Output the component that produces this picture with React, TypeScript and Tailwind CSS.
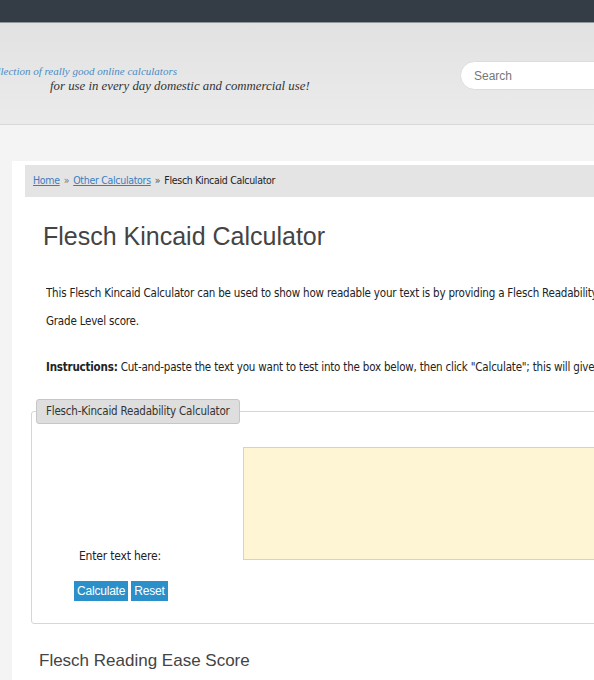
export default function App() {
  return (
    <div className="w-[594px] min-h-screen overflow-hidden bg-[#f4f4f4] font-['Liberation_Sans',Arial,sans-serif]">
      {/* top strip */}
      <div className="h-[23px] bg-[#343d45] border-b border-[#8f979b]" />

      {/* header */}
      <div className="h-[102px] bg-gradient-to-b from-[#e2e2e2] to-[#ebebeb] border-b border-[#d9d9d9] flex items-start">
        <div className="pt-[41px] font-['Liberation_Serif',serif] italic leading-[15px]">
          <div className="w-[177px] flex justify-end text-[11px]">
            <span className="whitespace-nowrap text-[#4a8cc4]">A Collection of really good online calculators</span>
          </div>
          <div className="pl-[50px] whitespace-nowrap text-[12.8px] text-[#333]">for use in every day domestic and commercial use!</div>
        </div>
        <div className="ml-auto mt-[38px] -mr-[40px] w-[174px] h-[29px] rounded-full bg-white border border-[#dcdcdc] flex items-center pl-[13px] shrink-0">
          <span className="text-[12px] text-[#777]">Search</span>
        </div>
      </div>

      {/* content */}
      <div className="pl-[12px] pt-[36px]">
        <div className="bg-white w-[700px] pl-[13px] pt-[4px] pb-[20px] text-[#222]">
          <div className="h-[32px] bg-[#e4e4e4] flex items-center pl-[8px] text-[10.5px] font-['DejaVu_Sans_Condensed',Tahoma,sans-serif] tracking-[-0.3px]">
            <a href="#" className="text-[#3b7dc0] underline">Home</a>
            <span className="mx-[4px] text-[#777]">»</span>
            <a href="#" className="text-[#3b7dc0] underline">Other Calculators</a>
            <span className="mx-[4px] text-[#555]">»</span>
            <span>Flesch Kincaid Calculator</span>
          </div>

          <h1 className="ml-[18px] mt-[23px] text-[25px] leading-[32px] text-[#444]">Flesch Kincaid Calculator</h1>

          <div className="ml-[21px] mt-[27px] text-[11.5px] leading-[28px] font-['DejaVu_Sans_Condensed',Tahoma,sans-serif] tracking-[-0.2px]">
            <p className="w-[560px] overflow-hidden whitespace-nowrap">This Flesch Kincaid Calculator can be used to show how readable your text is by providing a Flesch Readability Ease score and a Flesch-Kincaid</p>
            <p>Grade Level score.</p>
            <p className="mt-[18px] w-[560px] overflow-hidden whitespace-nowrap"><b>Instructions:</b> Cut-and-paste the text you want to test into the box below, then click "Calculate"; this will give you both scores.</p>
          </div>

          <fieldset className="ml-[6px] mt-[18px] border border-[#d6d6d6] rounded-[3px] pl-[4px] pb-[22px]">
            <legend className="h-[25px] px-[9px] bg-[#dedede] border border-[#c6c6c6] rounded-[3px] text-[11.5px] leading-[23px] text-[#333] font-['DejaVu_Sans_Condensed',Tahoma,sans-serif] tracking-[-0.2px]">
              Flesch-Kincaid Readability Calculator
            </legend>
            <div className="flex items-end mt-[23px]">
              <div className="w-[207px] pl-[43px] mb-[-3px] text-[12px] leading-[14px] text-[#222] font-['DejaVu_Sans_Condensed',Tahoma,sans-serif] tracking-[-0.2px]">
                Enter text here:
              </div>
              <div className="w-[420px] h-[113px] bg-[#fef5d4] border border-[#d9d2bd] shrink-0" />
            </div>
            <div className="flex gap-[3px] mt-[21px] pl-[38px]">
              <button className="h-[20px] px-[3px] bg-[#2b8fca] text-white text-[12px] leading-[20px] tracking-[-0.2px]">Calculate</button>
              <button className="h-[20px] px-[3px] bg-[#2b8fca] text-white text-[12px] leading-[20px] tracking-[-0.2px]">Reset</button>
            </div>
          </fieldset>

          <h2 className="ml-[14px] mt-[26px] text-[17px] leading-[22px] text-[#444]">Flesch Reading Ease Score</h2>
        </div>
      </div>
    </div>
  )
}
